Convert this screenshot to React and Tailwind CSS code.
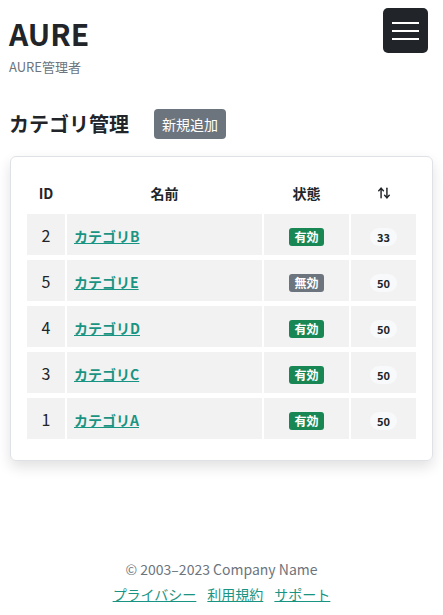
import React from 'react';
import { ArrowUpDown } from 'lucide-react';

const categories = [
  { id: 2, name: 'カテゴリB', active: true, count: 33 },
  { id: 5, name: 'カテゴリE', active: false, count: 50 },
  { id: 4, name: 'カテゴリD', active: true, count: 50 },
  { id: 3, name: 'カテゴリC', active: true, count: 50 },
  { id: 1, name: 'カテゴリA', active: true, count: 50 },
];

function App() {
  return (
    <div
      className="min-h-[615px] bg-white text-[#212529] flex flex-col"
      style={{ fontFamily: '"Noto Sans CJK JP", "Noto Sans", sans-serif' }}
    >
      {/* Header */}
      <header className="flex items-start justify-between pl-[9px] pr-[15px] pt-[8px]">
        <div>
          <h1 className="text-[30px] font-bold leading-[36px] mt-[7px]">AURE</h1>
          <p className="text-[13px] text-[#6c757d] leading-[18px] mt-[7px]">AURE管理者</p>
        </div>
        <button className="w-[45px] h-[45px] bg-[#212529] rounded-[5px] flex flex-col items-center justify-center gap-[6px]">
          <span className="block w-[27px] h-[2px] bg-white" />
          <span className="block w-[27px] h-[2px] bg-white" />
          <span className="block w-[27px] h-[2px] bg-white" />
        </button>
      </header>

      {/* Title */}
      <div className="flex items-center gap-[25px] pl-[9px] mt-[33px]">
        <h2 className="text-[20px] font-bold leading-[28px]">カテゴリ管理</h2>
        <button className="bg-[#6c757d] text-white text-[14px] leading-[20px] h-[30px] px-[8px] rounded-[4px]">
          新規追加
        </button>
      </div>

      {/* Card */}
      <div className="mx-[10px] mt-[17px] border border-[#dee2e6] rounded-[6px] shadow-[0_6px_14px_rgba(0,0,0,0.12)] px-[14px] pt-[15px] pb-[16px]">
        <table className="w-full border-separate border-spacing-x-[2px] border-spacing-y-[5px]">
          <thead>
            <tr className="h-[32px] text-[14px] font-bold">
              <th className="w-[38px] text-center">ID</th>
              <th className="text-center">名前</th>
              <th className="w-[85px] text-center">状態</th>
              <th className="w-[65px]">
                <ArrowUpDown size={14} strokeWidth={2.5} className="mx-auto" />
              </th>
            </tr>
          </thead>
          <tbody>
            {categories.map(c => (
              <tr key={c.id} className="h-[41px]">
                <td className="bg-[#f2f2f2] text-center text-[16px]">{c.id}</td>
                <td className="bg-[#f2f2f2] px-[7px]">
                  <a href="#" className="text-[#1a9482] font-bold underline text-[14px]">{c.name}</a>
                </td>
                <td className="bg-[#f2f2f2] text-center">
                  <span
                    className={`inline-block text-white text-[12px] font-bold leading-[12px] px-[5px] py-[3px] rounded-[3px] ${c.active ? 'bg-[#198754]' : 'bg-[#6c757d]'}`}
                  >
                    {c.active ? '有効' : '無効'}
                  </span>
                </td>
                <td className="bg-[#f2f2f2] text-center">
                  <span className="inline-block bg-[#f8f9fa] text-[11px] font-bold leading-[18px] px-[7px] rounded-full">
                    {c.count}
                  </span>
                </td>
              </tr>
            ))}
          </tbody>
        </table>
      </div>

      {/* Footer */}
      <footer className="mt-auto pb-[10px] text-center text-[14px]">
        <p className="text-[#6c757d] leading-[22px]">© 2003–2023 Company Name</p>
        <div className="flex justify-center gap-[11px] leading-[22px] mt-[3px]">
          <a href="#" className="text-[#1a9482] underline">プライバシー</a>
          <a href="#" className="text-[#1a9482] underline">利用規約</a>
          <a href="#" className="text-[#1a9482] underline">サポート</a>
        </div>
      </footer>
    </div>
  );
}

export default App;
